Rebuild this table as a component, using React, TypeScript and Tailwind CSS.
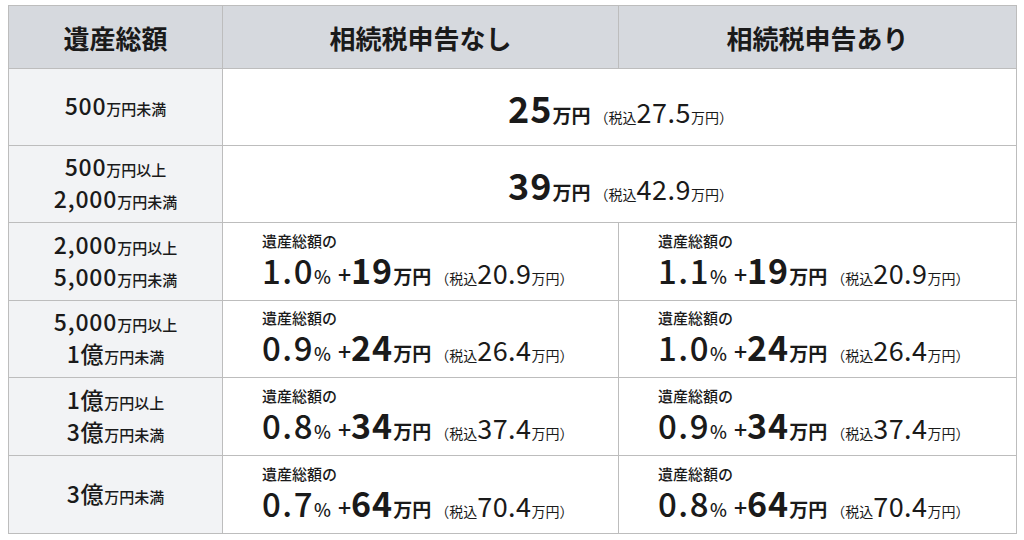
import React from "react";

const FONT = "font-['Noto_Sans_CJK_JP','Noto_Sans',sans-serif]";

function Amount({ parts }: { parts: { n: string; u: string }[] }) {
  return (
    <div className="flex flex-col items-center justify-center h-full bg-[#f2f3f5] text-[#1a1a1a] leading-[29px] font-medium">
      {parts.map((p, i) => (
        <div key={i} className="whitespace-nowrap">
          <span className="text-[23px] tracking-[0.8px]">{p.n}</span>
          <span className="text-[15px]">{p.u}</span>
        </div>
      ))}
    </div>
  );
}

function Flat({ v, tax }: { v: string; tax: string }) {
  return (
    <div className="col-span-2 flex items-center justify-center bg-white text-[#1a1a1a] whitespace-nowrap pl-[2px]">
      <div className="flex items-baseline leading-none">
        <span className="text-[36px] font-bold tracking-[1px]">{v}</span>
        <span className="text-[19px] font-bold">万円</span>
        <span className="text-[14px] ml-[4px]">（税込</span>
        <span className="text-[27px] tracking-[0.5px]">{tax}</span>
        <span className="text-[14px]">万円）</span>
      </div>
    </div>
  );
}

function Price({ rate, add, tax }: { rate: string; add: string; tax: string }) {
  return (
    <div className="flex flex-col justify-center bg-white pl-[39px] text-[#1a1a1a] pt-[2px]">
      <div className="text-[15px] font-medium leading-[22px]">遺産総額の</div>
      <div className="flex items-baseline leading-[36px] whitespace-nowrap">
        <span className="text-[33px] font-medium tracking-[1.5px]">{rate}</span>
        <span className="text-[18px] font-medium">%</span>
        <span className="text-[23px] font-medium ml-[7px]">+</span>
        <span className="text-[34px] font-bold tracking-[1px]">{add}</span>
        <span className="text-[19px] font-bold">万円</span>
        <span className="text-[14px] ml-[4px]">（税込</span>
        <span className="text-[27px] tracking-[0.5px]">{tax}</span>
        <span className="text-[14px]">万円）</span>
      </div>
    </div>
  );
}

export default function App() {
  return (
    <div className={`w-[1024px] h-[540px] bg-white pt-[5px] ${FONT}`}>
      <div className="ml-[8px] w-[1009px] grid grid-cols-[213px_395px_397px] grid-rows-[62px_76px_76px_77px_76px_77px_77px] gap-px bg-[#bdbdbd] border border-[#bdbdbd]">
        <div className="flex items-center justify-center bg-[#d6d9de] text-[26px] font-semibold text-[#1a1a1a]">遺産総額</div>
        <div className="flex items-center justify-center bg-[#d6d9de] text-[26px] font-semibold text-[#1a1a1a]">相続税申告なし</div>
        <div className="flex items-center justify-center bg-[#d6d9de] text-[26px] font-semibold text-[#1a1a1a]">相続税申告あり</div>

        <Amount parts={[{ n: "500", u: "万円未満" }]} />
        <Flat v="25" tax="27.5" />

        <Amount parts={[{ n: "500", u: "万円以上" }, { n: "2,000", u: "万円未満" }]} />
        <Flat v="39" tax="42.9" />

        <Amount parts={[{ n: "2,000", u: "万円以上" }, { n: "5,000", u: "万円未満" }]} />
        <Price rate="1.0" add="19" tax="20.9" />
        <Price rate="1.1" add="19" tax="20.9" />

        <Amount parts={[{ n: "5,000", u: "万円以上" }, { n: "1億", u: "万円未満" }]} />
        <Price rate="0.9" add="24" tax="26.4" />
        <Price rate="1.0" add="24" tax="26.4" />

        <Amount parts={[{ n: "1億", u: "万円以上" }, { n: "3億", u: "万円未満" }]} />
        <Price rate="0.8" add="34" tax="37.4" />
        <Price rate="0.9" add="34" tax="37.4" />

        <Amount parts={[{ n: "3億", u: "万円未満" }]} />
        <Price rate="0.7" add="64" tax="70.4" />
        <Price rate="0.8" add="64" tax="70.4" />
      </div>
    </div>
  );
}
